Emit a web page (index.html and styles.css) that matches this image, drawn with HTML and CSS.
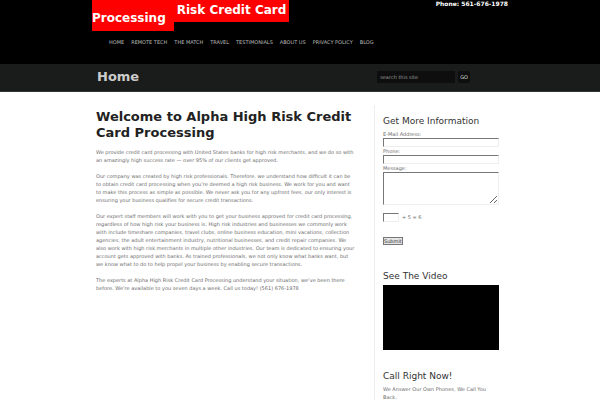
FILE: index.html
```html
<!DOCTYPE html>
<html lang="en">

<head>
    <meta charset="utf-8">
    <meta name="viewport" content="width=device-width, initial-scale=1">
    <title>Alpha High Risk Credit Card Processing</title>
    <link rel="stylesheet" href="styles.css">
</head>

<body>
    <header id="header">
        <div class="container">
            <div class="top">
                <a class="logo" href="#"><span class="logo-left">Processing</span><span class="logo-right">Risk Credit Card</span></a>
                <strong class="phone">Phone: 561-676-1978</strong>
            </div>
            <nav class="menu">
                <a href="#">HOME</a>
                <a href="#">REMOTE TECH</a>
                <a href="#">THE MATCH</a>
                <a href="#">TRAVEL</a>
                <a href="#">TESTIMONIALS</a>
                <a href="#">ABOUT US</a>
                <a href="#">PRIVACY POLICY</a>
                <a href="#">BLOG</a>
            </nav>
        </div>
    </header>

    <div id="title-bar">
        <div class="container title-row">
            <h2>Home</h2>
            <form class="search">
                <input type="text" name="s" aria-label="Search" placeholder="search this site">
                <button type="submit">GO</button>
            </form>
        </div>
    </div>

    <div class="container columns">
        <main class="content">
            <h1>Welcome to Alpha High Risk Credit Card Processing</h1>
            <p>We provide credit card processing with United States banks for high risk merchants, and we do so with an amazingly high success rate — over 95% of our clients get approved.</p>
            <p>Our company was created by high risk professionals. Therefore, we understand how difficult it can be to obtain credit card processing when you’re deemed a high risk business. We work for you and want to make this process as simple as possible. We never ask you for any upfront fees, our only interest is ensuring your business qualifies for secure credit transactions.</p>
            <p>Our expert staff members will work with you to get your business approved for credit card processing, regardless of how high risk your business is. High risk industries and businesses we commonly work with include timeshare companies, travel clubs, online business education, mini vacations, collection agencies, the adult entertainment industry, nutritional businesses, and credit repair companies. We also work with high risk merchants in multiple other industries. Our team is dedicated to ensuring your account gets approved with banks. As trained professionals, we not only know what banks want, but we know what to do to help propel your business by enabling secure transactions.</p>
            <p>The experts at Alpha High Risk Credit Card Processing understand your situation, we’ve been there before. We’re available to you seven days a week. Call us today! (561) 676-1978</p>
        </main>

        <aside class="sidebar">
            <section>
                <h3>Get More Information</h3>
                <form class="contact">
                    <label for="email">E-Mail Address:</label>
                    <input type="text" id="email" name="email">
                    <label for="tel">Phone:</label>
                    <input type="text" id="tel" name="tel">
                    <label for="message">Message:</label>
                    <textarea id="message" name="message"></textarea>
                    <div class="sum">
                        <input type="text" id="answer" name="answer">
                        <label for="answer">+ 5 = 6</label>
                    </div>
                    <button type="submit">Submit</button>
                </form>
            </section>
            <section>
                <h3>See The Video</h3>
                <div class="video"></div>
            </section>
            <section>
                <h3>Call Right Now!</h3>
                <p>We Answer Our Own Phones, We Call You Back.</p>
            </section>
        </aside>
    </div>
</body>

</html>
```
FILE: styles.css
```css
* {
    box-sizing: border-box;
}

body {
    margin: 0;
    background: #fff;
    color: #6c6c6c;
    font-family: "DejaVu Sans", Verdana, sans-serif;
    font-size: 5px;
    line-height: 8px;
}

h1, h2, h3, p {
    margin: 0;
}

input, textarea, button {
    font: inherit;
    color: inherit;
    border-radius: 0;
}

.container {
    max-width: 416px;
    margin: 0 auto;
}

#header {
    background: #000;
    padding-bottom: 18px;
}

.top {
    display: flex;
    justify-content: space-between;
    align-items: flex-start;
}

.logo {
    display: flex;
    align-items: flex-start;
    color: #fff;
    font-size: 12px;
    font-weight: bold;
    line-height: 15px;
    text-decoration: none;
}

.logo span {
    background: #f00;
}

.logo-left {
    padding: 11px 8px 5px 0;
}

.logo-right {
    padding: 3px 3px 4px;
}

.phone {
    color: #fff;
    font-size: 6px;
}

.menu {
    display: flex;
    gap: 7px;
    padding: 7px 17px 0;
}

.menu a {
    color: #bbb;
    text-decoration: none;
}

#title-bar {
    background: #1a1c1b;
    border-bottom: 1px solid #333;
}

.title-row {
    display: flex;
    justify-content: space-between;
    align-items: center;
    height: 27px;
    padding: 0 38px 2px 5px;
}

.title-row h2 {
    color: #ccc;
    font-size: 13px;
    line-height: 16px;
}

.search {
    display: flex;
    gap: 3px;
}

.search input {
    width: 78px;
    height: 12px;
    padding: 0 3px;
    border: 0;
    background: #0d0e0d;
    color: #999;
}

.search input::placeholder {
    color: #999;
    opacity: 1;
}

.search button {
    height: 12px;
    padding: 0 2px;
    border: 0;
    border-radius: 2px;
    background: #0d0e0d;
    color: #ddd;
}

.columns {
    display: flex;
    padding: 13px 9px 0 4px;
}

.content {
    flex: 1;
    padding: 4px 18px 0 0;
}

.content h1 {
    margin-bottom: 7px;
    color: #222;
    font-size: 13px;
    line-height: 16px;
}

.content p {
    margin-bottom: 8px;
}

.sidebar {
    width: 125px;
    padding: 10px 0 0 8px;
    border-left: 1px solid #eee;
}

.sidebar section {
    margin-bottom: 20px;
}

.sidebar section:last-child {
    margin-bottom: 0;
}

.sidebar h3 {
    margin-bottom: 3px;
    color: #333;
    font-size: 9px;
    font-weight: normal;
    line-height: 12px;
}

.contact {
    padding-bottom: 5px;
}

.contact label {
    display: block;
}

.contact input,
.contact textarea {
    display: block;
    width: 100%;
    height: 9px;
    margin: 0;
    padding: 0 1px;
    border: 1px solid #eee;
    border-top-color: #777;
    border-left-color: #777;
    background: #fff;
}

.contact textarea {
    height: 33px;
}

.sum {
    display: flex;
    gap: 3px;
    margin: 8px 0 15px;
}

.contact .sum input {
    width: 16px;
}

.contact button {
    display: block;
    height: 8px;
    padding: 0;
    border: 1px solid #777;
    background: #e5e5e5;
    color: #333;
    line-height: 6px;
}

.video {
    height: 65px;
    background: #000;
}
```
